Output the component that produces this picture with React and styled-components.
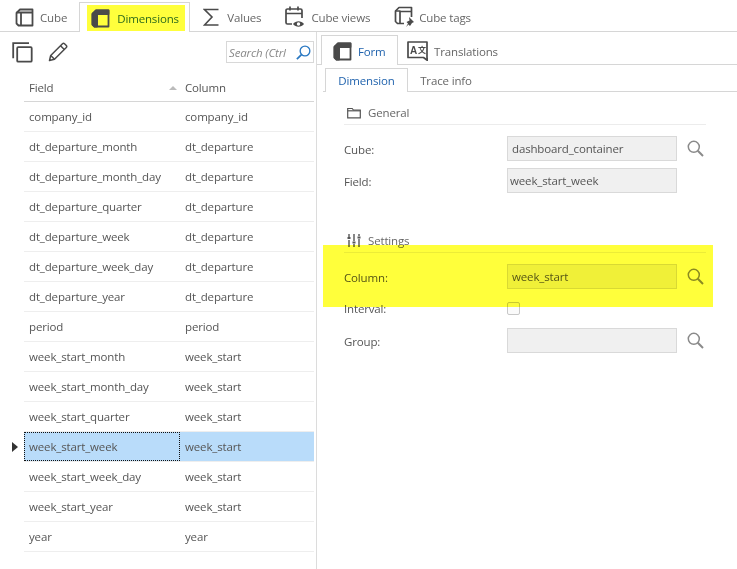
import React from 'react';
import styled, { createGlobalStyle } from 'styled-components';

const GlobalStyle = createGlobalStyle`
  html, body {
    margin: 0;
    padding: 0;
    background: #fff;
  }
  body {
    font-family: "Open Sans", "Noto Sans", sans-serif;
    font-size: 11.5px;
    letter-spacing: -0.15px;
    color: #555;
  }
`;

const Page = styled.div`
  width: 737px;
  height: 569px;
  overflow: hidden;
  display: flex;
  flex-direction: column;
`;

const TopTabs = styled.div`
  height: 31px;
  flex: none;
  display: flex;
  align-items: flex-end;
  border-bottom: 1px solid #d6d6d6;
  padding-left: 15px;
`;

const TopTab = styled.div`
  display: flex;
  align-items: center;
  gap: ${(p) => p.$gap}px;
  height: 28px;
  margin-left: ${(p) => p.$left || 0}px;
  color: #666;
`;

const ActiveTopTab = styled.div`
  box-sizing: border-box;
  width: 111px;
  height: 30px;
  margin: 0 0 -1px 12px;
  padding: 2px 4px 0 7px;
  border: 1px solid #d6d6d6;
  border-bottom: 0;
  background: #fff;
`;

const Marker = styled.div`
  height: 26px;
  display: flex;
  align-items: center;
  gap: 7px;
  padding-left: 4px;
  background: #ffff3c;
  color: #2c6a1c;
`;

const Body = styled.div`
  flex: 1;
  display: flex;
  min-height: 0;
`;

const LeftPane = styled.div`
  width: 317px;
  flex: none;
  box-sizing: border-box;
  border-right: 1px solid #dcdcdc;
`;

const Toolbar = styled.div`
  height: 40px;
  display: flex;
  align-items: center;
  padding: 0 2px 0 12px;
  gap: 15px;
`;

const SearchBox = styled.div`
  box-sizing: border-box;
  margin-left: auto;
  width: 88px;
  height: 22px;
  border: 1px solid #d8d8d8;
  display: flex;
  align-items: center;
  justify-content: space-between;
  padding: 0 2px;
  font-style: italic;
  color: #888;
  white-space: nowrap;
  overflow: hidden;
`;

const Grid = styled.div`
  margin: 0 2px 0 24px;
`;

const Row = styled.div`
  box-sizing: border-box;
  height: 30px;
  display: grid;
  grid-template-columns: 156px 1fr;
  align-items: stretch;
  border-bottom: 1px solid #eee;
  position: relative;
  background: ${(p) => (p.$selected ? '#b9dcfa' : 'transparent')};
`;

const HeaderRow = styled(Row)`
  border-bottom: 1px solid #d6d6d6;
`;

const Cell = styled.div`
  display: flex;
  align-items: center;
  padding-left: 5px;
  box-sizing: border-box;
  outline: ${(p) => (p.$focus ? '1px dotted #111' : 'none')};
  outline-offset: -1px;
`;

const HeadCell = styled(Cell)`
  justify-content: space-between;
  padding: 2px 3px 0 5px;
`;

const HeadLabel = styled(Cell)`
  padding-top: 2px;
`;

const SortUp = styled.i`
  width: 0;
  height: 0;
  border-left: 4px solid transparent;
  border-right: 4px solid transparent;
  border-bottom: 4px solid #bbb;
`;

const RowPointer = styled.i`
  position: absolute;
  left: -12px;
  top: 10px;
  width: 0;
  height: 0;
  border-top: 5px solid transparent;
  border-bottom: 5px solid transparent;
  border-left: 6px solid #333;
`;

const RightPane = styled.div`
  flex: 1;
  position: relative;
  min-width: 0;
`;

const FormTabs = styled.div`
  height: 33px;
  box-sizing: border-box;
  display: flex;
  align-items: flex-end;
  border-bottom: 1px solid #d6d6d6;
  padding-left: 4px;
`;

const FormTab = styled.div`
  box-sizing: border-box;
  height: 30px;
  width: ${(p) => p.$width}px;
  display: flex;
  align-items: center;
  gap: 6px;
  padding: 1px 0 0 ${(p) => p.$pad}px;
  margin-bottom: -1px;
  color: ${(p) => (p.$active ? '#1f62ad' : '#666')};
  background: ${(p) => (p.$active ? '#fff' : 'transparent')};
  border: ${(p) => (p.$active ? '1px solid #d6d6d6' : '1px solid transparent')};
  border-bottom: 0;
`;

const SubTabs = styled.div`
  height: 27px;
  box-sizing: border-box;
  display: flex;
  align-items: flex-end;
  border-bottom: 1px solid #d6d6d6;
  margin-left: 6px;
  padding-left: 2px;
`;

const SubTab = styled.div`
  box-sizing: border-box;
  height: 24px;
  width: ${(p) => p.$width}px;
  display: flex;
  align-items: center;
  justify-content: center;
  margin-bottom: -1px;
  color: ${(p) => (p.$active ? '#1f62ad' : '#666')};
  background: ${(p) => (p.$active ? '#fff' : 'transparent')};
  border: ${(p) => (p.$active ? '1px solid #d6d6d6' : '1px solid transparent')};
  border-bottom: 0;
`;

const Form = styled.div`
  padding: 0 31px 0 27px;
`;

const Section = styled.div`
  box-sizing: border-box;
  height: 24px;
  display: flex;
  align-items: center;
  gap: 7px;
  padding-left: 3px;
  margin-top: ${(p) => p.$top}px;
  margin-bottom: ${(p) => p.$bottom}px;
  border-bottom: 1px solid #ececec;
  color: #666;
`;

const Field = styled.div`
  height: ${(p) => (p.$compact ? 14 : 25)}px;
  display: flex;
  align-items: center;
  margin-bottom: ${(p) => p.$bottom}px;
`;

const Label = styled.div`
  width: 163px;
  flex: none;
  padding-top: 1px;
`;

const Input = styled.div`
  box-sizing: border-box;
  width: 170px;
  height: 25px;
  flex: none;
  display: flex;
  align-items: center;
  padding: 0 0 0 ${(p) => p.$pad || 4}px;
  background: #f0f0f0;
  border: 1px solid #d9d9d9;
`;

const Lookup = styled.div`
  margin-left: 10px;
  display: flex;
`;

const Checkbox = styled.i`
  box-sizing: border-box;
  width: 13px;
  height: 13px;
  border: 1px solid #c8c8c8;
  border-radius: 2px;
  background: #fafafa;
`;

const Highlight = styled.div`
  position: absolute;
  left: 6px;
  top: 213px;
  width: 390px;
  height: 62px;
  background: #ffff00;
  mix-blend-mode: multiply;
  opacity: 0.77;
  pointer-events: none;
`;

const CubeIcon = ({ filled, size = 19 }) => (
  <svg width={size} height={size} viewBox="0 0 19 19" fill="none" stroke="#4a4a4a" strokeWidth="1.800" strokeLinejoin="round">
    {filled && <path d="M1.500 5 5 1.500h12.500V5H6v12.500H3.500l-2-2z" fill="#4a4a4a" />}
    <path d="M1.500 5 5 1.500h12.500v16h-14l-2-2z" />
    <path d="M1.500 4.500H6v13M6 4.500h11.500" />
  </svg>
);

const SigmaIcon = () => (
  <svg width="16" height="19" viewBox="0 0 16 19" fill="none" stroke="#4a4a4a" strokeWidth="1.600">
    <path d="M15.500 1.500H1.500l7.500 7.500-7.500 8h14" />
  </svg>
);

const CalendarEyeIcon = () => (
  <svg width="20" height="22" viewBox="0 0 20 22" fill="none" stroke="#4a4a4a" strokeWidth="1.700">
    <path d="M7 18H2.500a1.500 1.500 0 0 1-1.500-1.500V4.500A1.500 1.500 0 0 1 2.500 3h13A1.500 1.500 0 0 1 17 4.500V12M1 7.500h16M5 .5v4M13 .5v4" />
    <path d="M8 18c2.800-3.600 8.200-3.600 11 0-2.800 3.600-8.200 3.600-11 0z" fill="#4a4a4a" stroke="none" />
    <circle cx="13.500" cy="18" r="1.700" fill="#fff" stroke="none" />
  </svg>
);

const CubePinIcon = () => (
  <svg width="21" height="22" viewBox="0 0 21 22" fill="none" stroke="#4a4a4a" strokeWidth="1.700" strokeLinejoin="round">
    <path d="M10 17.500H3.500l-2-2V5L5 1.500h12.500V11" />
    <path d="M1.500 5H6v12M6 5.500h11.500" />
    <path d="M15 11l5 5-2 1-2 3-1.500-1.500L12 21l2-3.500-1.500-1.500 3-1.500z" fill="#4a4a4a" stroke="none" />
  </svg>
);

const TranslateIcon = () => (
  <svg width="21" height="20" viewBox="0 0 21 20" fill="none">
    <path d="M1 1h19v15.500l.5 3-4-3H1z" stroke="#4a4a4a" strokeWidth="1.700" strokeLinejoin="round" />
    <text x="3" y="12.500" fontFamily="Liberation Sans, sans-serif" fontWeight="700" fontSize="10" fill="#4a4a4a">A</text>
    <text x="11" y="12" fontFamily="Noto Sans CJK SC, sans-serif" fontWeight="700" fontSize="8" fill="#4a4a4a">文</text>
  </svg>
);

const CopyIcon = () => (
  <svg width="21" height="21" viewBox="0 0 21 21" fill="none" stroke="#4a4a4a" strokeWidth="1.800">
    <path d="M17 1.200H1.200v15" />
    <rect x="5.200" y="5.200" width="14.500" height="14.500" rx="1" />
  </svg>
);

const PencilIcon = () => (
  <svg width="20" height="20" viewBox="0 0 20 20" fill="none" stroke="#4a4a4a" strokeWidth="1.500" strokeLinejoin="round">
    <path d="M1.500 18.500l1.200-5L14.500 1.700a1.500 1.500 0 0 1 2 0l1.800 1.800a1.500 1.500 0 0 1 0 2L6.500 17.300z" />
    <path d="M2.700 13.500l3.800 3.800M12.500 3.700l3.800 3.800" />
  </svg>
);

const SearchIcon = ({ color = '#8a8a8a', size = 17, flip }) => (
  <svg width={size} height={size} viewBox="0 0 17 17" fill="none" stroke={color} strokeWidth="1.500" transform={flip ? 'scale(-1 1)' : undefined}>
    <circle cx="6.800" cy="6.800" r="5.500" />
    <path d="M10.800 10.800l5.200 5.200" strokeWidth="2" />
  </svg>
);

const FolderIcon = () => (
  <svg width="14" height="12" viewBox="0 0 14 12" fill="none" stroke="#555" strokeWidth="1.200">
    <path d="M.7 10.800V1.500h4.500l1.200 1.500h6.900v7.800z" />
    <path d="M.7 3.800h12.600" />
  </svg>
);

const SlidersIcon = () => (
  <svg width="14" height="15" viewBox="0 0 14 15" fill="none" stroke="#555" strokeWidth="1.400">
    <path d="M2 1v3M2 7v7M7 1v7M7 11v3M12 1v2M12 6v8" />
    <path d="M.5 5h3M5.500 9.500h3M10.500 4.500h3" strokeWidth="2" />
  </svg>
);

const rows = [
  ['company_id', 'company_id'],
  ['dt_departure_month', 'dt_departure'],
  ['dt_departure_month_day', 'dt_departure'],
  ['dt_departure_quarter', 'dt_departure'],
  ['dt_departure_week', 'dt_departure'],
  ['dt_departure_week_day', 'dt_departure'],
  ['dt_departure_year', 'dt_departure'],
  ['period', 'period'],
  ['week_start_month', 'week_start'],
  ['week_start_month_day', 'week_start'],
  ['week_start_quarter', 'week_start'],
  ['week_start_week', 'week_start'],
  ['week_start_week_day', 'week_start'],
  ['week_start_year', 'week_start'],
  ['year', 'year'],
];

const App = () => {
  return (
    <Page>
      <GlobalStyle />
      <TopTabs>
        <TopTab $gap={6}>
          <CubeIcon />
          Cube
        </TopTab>
        <ActiveTopTab>
          <Marker>
            <CubeIcon filled />
            Dimensions
          </Marker>
        </ActiveTopTab>
        <TopTab $left={13} $gap={8}>
          <SigmaIcon />
          Values
        </TopTab>
        <TopTab $left={24} $gap={6}>
          <CalendarEyeIcon />
          Cube views
        </TopTab>
        <TopTab $left={24} $gap={4}>
          <CubePinIcon />
          Cube tags
        </TopTab>
      </TopTabs>

      <Body>
        <LeftPane>
          <Toolbar>
            <CopyIcon />
            <PencilIcon />
            <SearchBox>
              Search (Ctrl
              <SearchIcon color="#2a78c2" size={15} flip />
            </SearchBox>
          </Toolbar>
          <Grid>
            <HeaderRow>
              <HeadCell>
                Field
                <SortUp />
              </HeadCell>
              <HeadLabel>Column</HeadLabel>
            </HeaderRow>
            {rows.map(([field, column]) => {
              const selected = field === 'week_start_week';
              return (
                <Row key={field} $selected={selected}>
                  {selected && <RowPointer />}
                  <Cell $focus={selected}>{field}</Cell>
                  <Cell>{column}</Cell>
                </Row>
              );
            })}
          </Grid>
        </LeftPane>

        <RightPane>
          <FormTabs>
            <FormTab $active $width={77} $pad={11}>
              <CubeIcon filled />
              Form
            </FormTab>
            <FormTab $width={120} $pad={8}>
              <TranslateIcon />
              Translations
            </FormTab>
          </FormTabs>
          <SubTabs>
            <SubTab $active $width={83}>Dimension</SubTab>
            <SubTab $width={76}>Trace info</SubTab>
          </SubTabs>
          <Form>
            <Section $top={9} $bottom={11}>
              <FolderIcon />
              General
            </Section>
            <Field $bottom={7}>
              <Label>Cube:</Label>
              <Input>dashboard_container</Input>
              <Lookup><SearchIcon /></Lookup>
            </Field>
            <Field $bottom={0}>
              <Label>Field:</Label>
              <Input $pad={2}>week_start_week</Input>
            </Field>
            <Section $top={36} $bottom={11}>
              <SlidersIcon />
              Settings
            </Section>
            <Field $bottom={12}>
              <Label>Column:</Label>
              <Input>week_start</Input>
              <Lookup><SearchIcon /></Lookup>
            </Field>
            <Field $compact $bottom={13}>
              <Label>Interval:</Label>
              <Checkbox />
            </Field>
            <Field $bottom={0}>
              <Label>Group:</Label>
              <Input />
              <Lookup><SearchIcon /></Lookup>
            </Field>
          </Form>
          <Highlight />
        </RightPane>
      </Body>
    </Page>
  );
};

export default App;
